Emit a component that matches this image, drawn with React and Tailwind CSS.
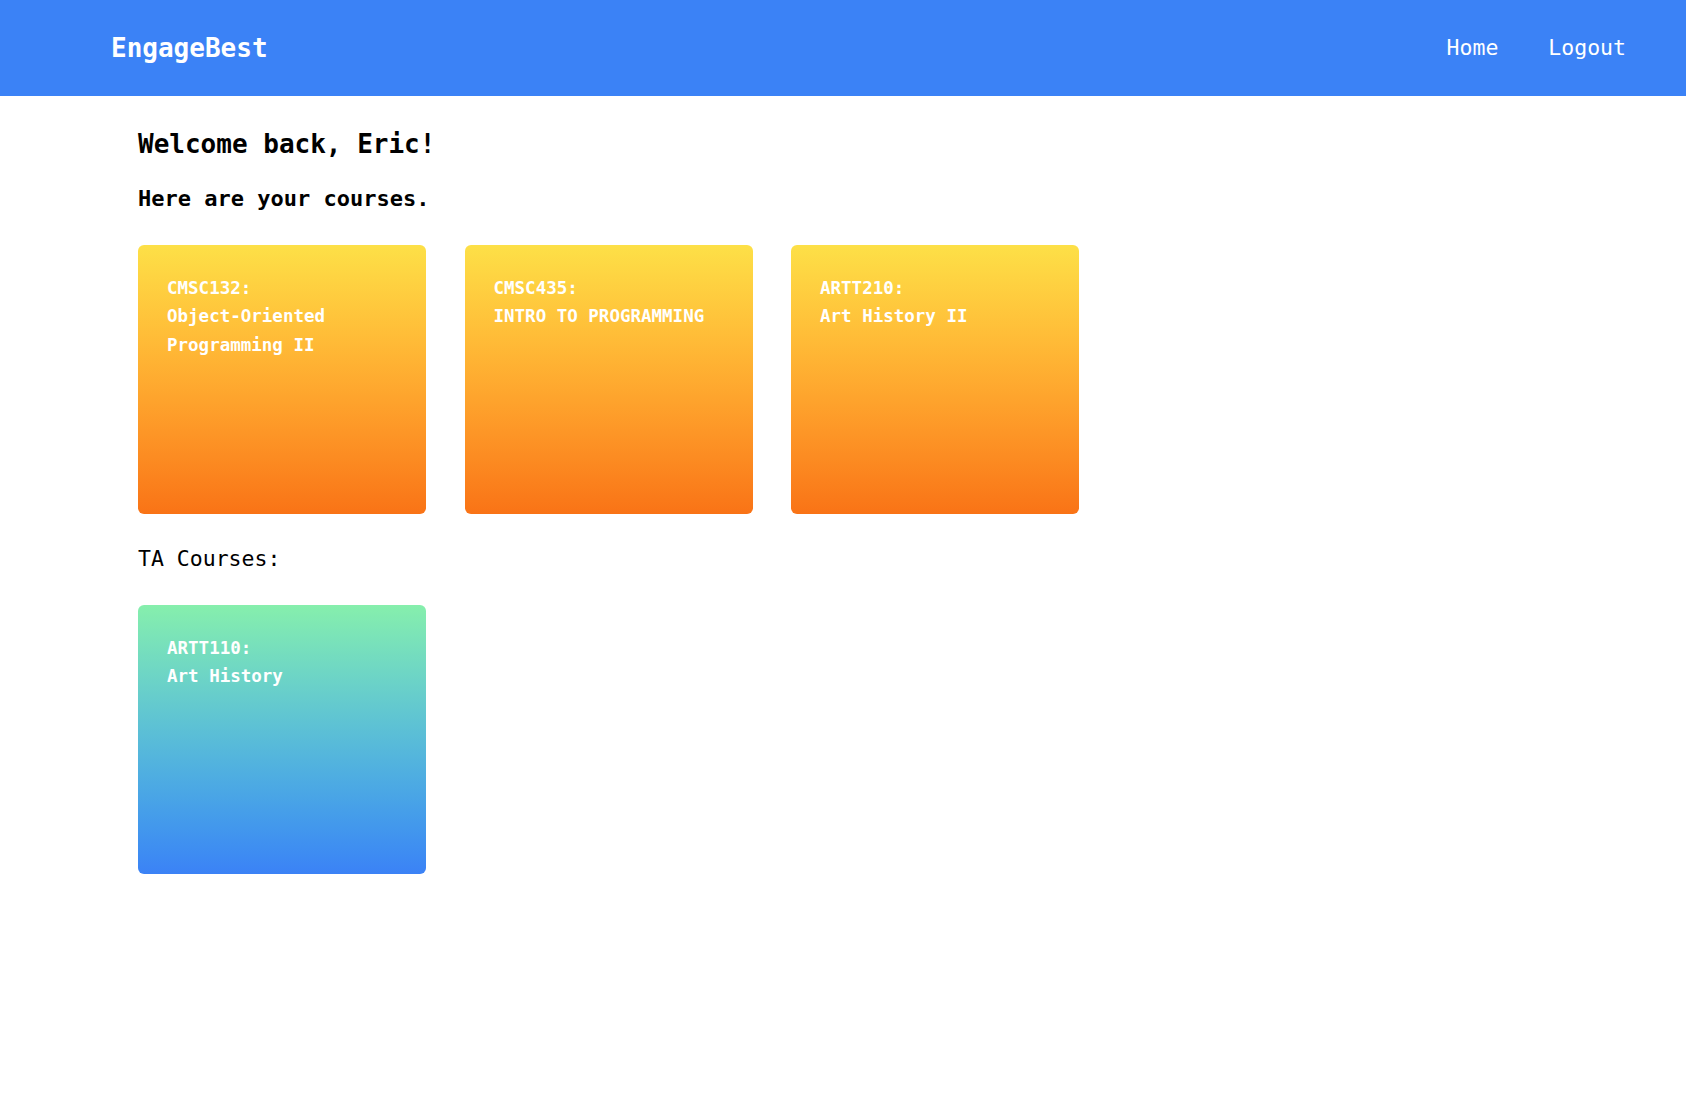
import React from "react";

const courses = [
  { code: "CMSC132:", name: "Object-Oriented Programming II" },
  { code: "CMSC435:", name: "INTRO TO PROGRAMMING" },
  { code: "ARTT210:", name: "Art History II" },
];

const taCourses = [{ code: "ARTT110:", name: "Art History" }];

function CourseCard({ course, ta }) {
  return (
    <div
      className={`w-[288px] h-[269px] rounded-[6px] pt-[29px] px-[29px] text-white font-bold text-[17.5px] leading-[28.4px] ${
        ta
          ? "bg-gradient-to-b from-[#86efac] to-[#3b82f6]"
          : "bg-gradient-to-b from-[#fde047] to-[#f97316]"
      }`}
    >
      <div>{course.code}</div>
      <div className="w-[215px]">{course.name}</div>
    </div>
  );
}

export default function App() {
  return (
    <div className="min-h-screen bg-white font-['DejaVu_Sans_Mono',monospace]">
      <header className="h-[96px] bg-[#3b82f6] flex items-center justify-between pl-[111px] pr-[60px] text-white">
        <div className="text-[26px] font-bold">EngageBest</div>
        <nav className="flex gap-[50px] text-[21.5px]">
          <a href="#">Home</a>
          <a href="#">Logout</a>
        </nav>
      </header>

      <main className="pl-[138px]">
        <h1 className="mt-[32px] text-[26px] leading-[32px] font-bold text-black">Welcome back, Eric!</h1>
        <h2 className="mt-[25px] text-[22px] leading-[28px] font-bold text-black">Here are your courses.</h2>

        <div className="mt-[32px] flex gap-[38.5px]">
          {courses.map((c) => (
            <CourseCard key={c.code} course={c} />
          ))}
        </div>

        <p className="mt-[31px] text-[21.5px] leading-[28px] text-black">TA Courses:</p>

        <div className="mt-[32px] flex gap-[38.5px]">
          {taCourses.map((c) => (
            <CourseCard key={c.code} course={c} ta />
          ))}
        </div>
      </main>
    </div>
  );
}
